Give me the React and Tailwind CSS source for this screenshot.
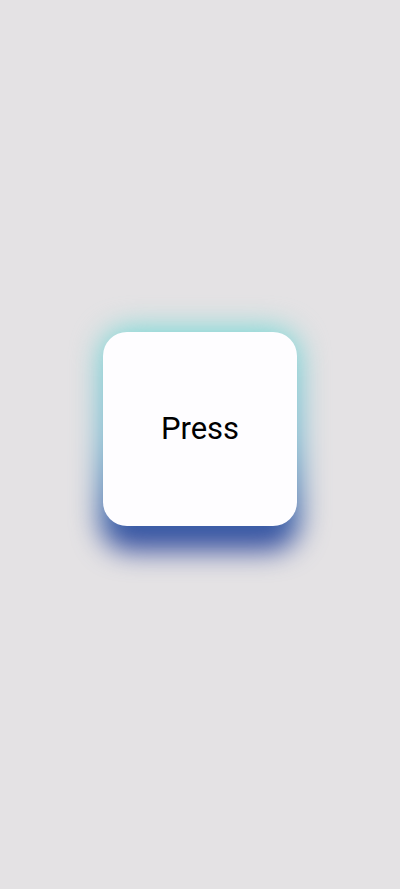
import React from 'react';

const App = () => {
  return (
    <div className="flex min-h-[889px] w-full items-center justify-center bg-[#e4e2e4] pb-[31px]" style={{ fontFamily: 'Roboto, "Noto Sans", sans-serif' }}>
      <div className="relative h-[194px] w-[194px]">
        {/* gradient glow behind the card */}
        <div className="absolute inset-x-[-3px] top-[-4px] bottom-[-24px] rounded-[30px] bg-gradient-to-b from-[#7adcd6] via-[#6cb4cf] via-50% to-[#2a3c96] blur-[14px]" />
        <button className="relative flex h-full w-full items-center justify-center rounded-[24px] bg-[#fefdff] text-[31px] text-black">
          Press
        </button>
      </div>
    </div>
  );
};

export default App;
